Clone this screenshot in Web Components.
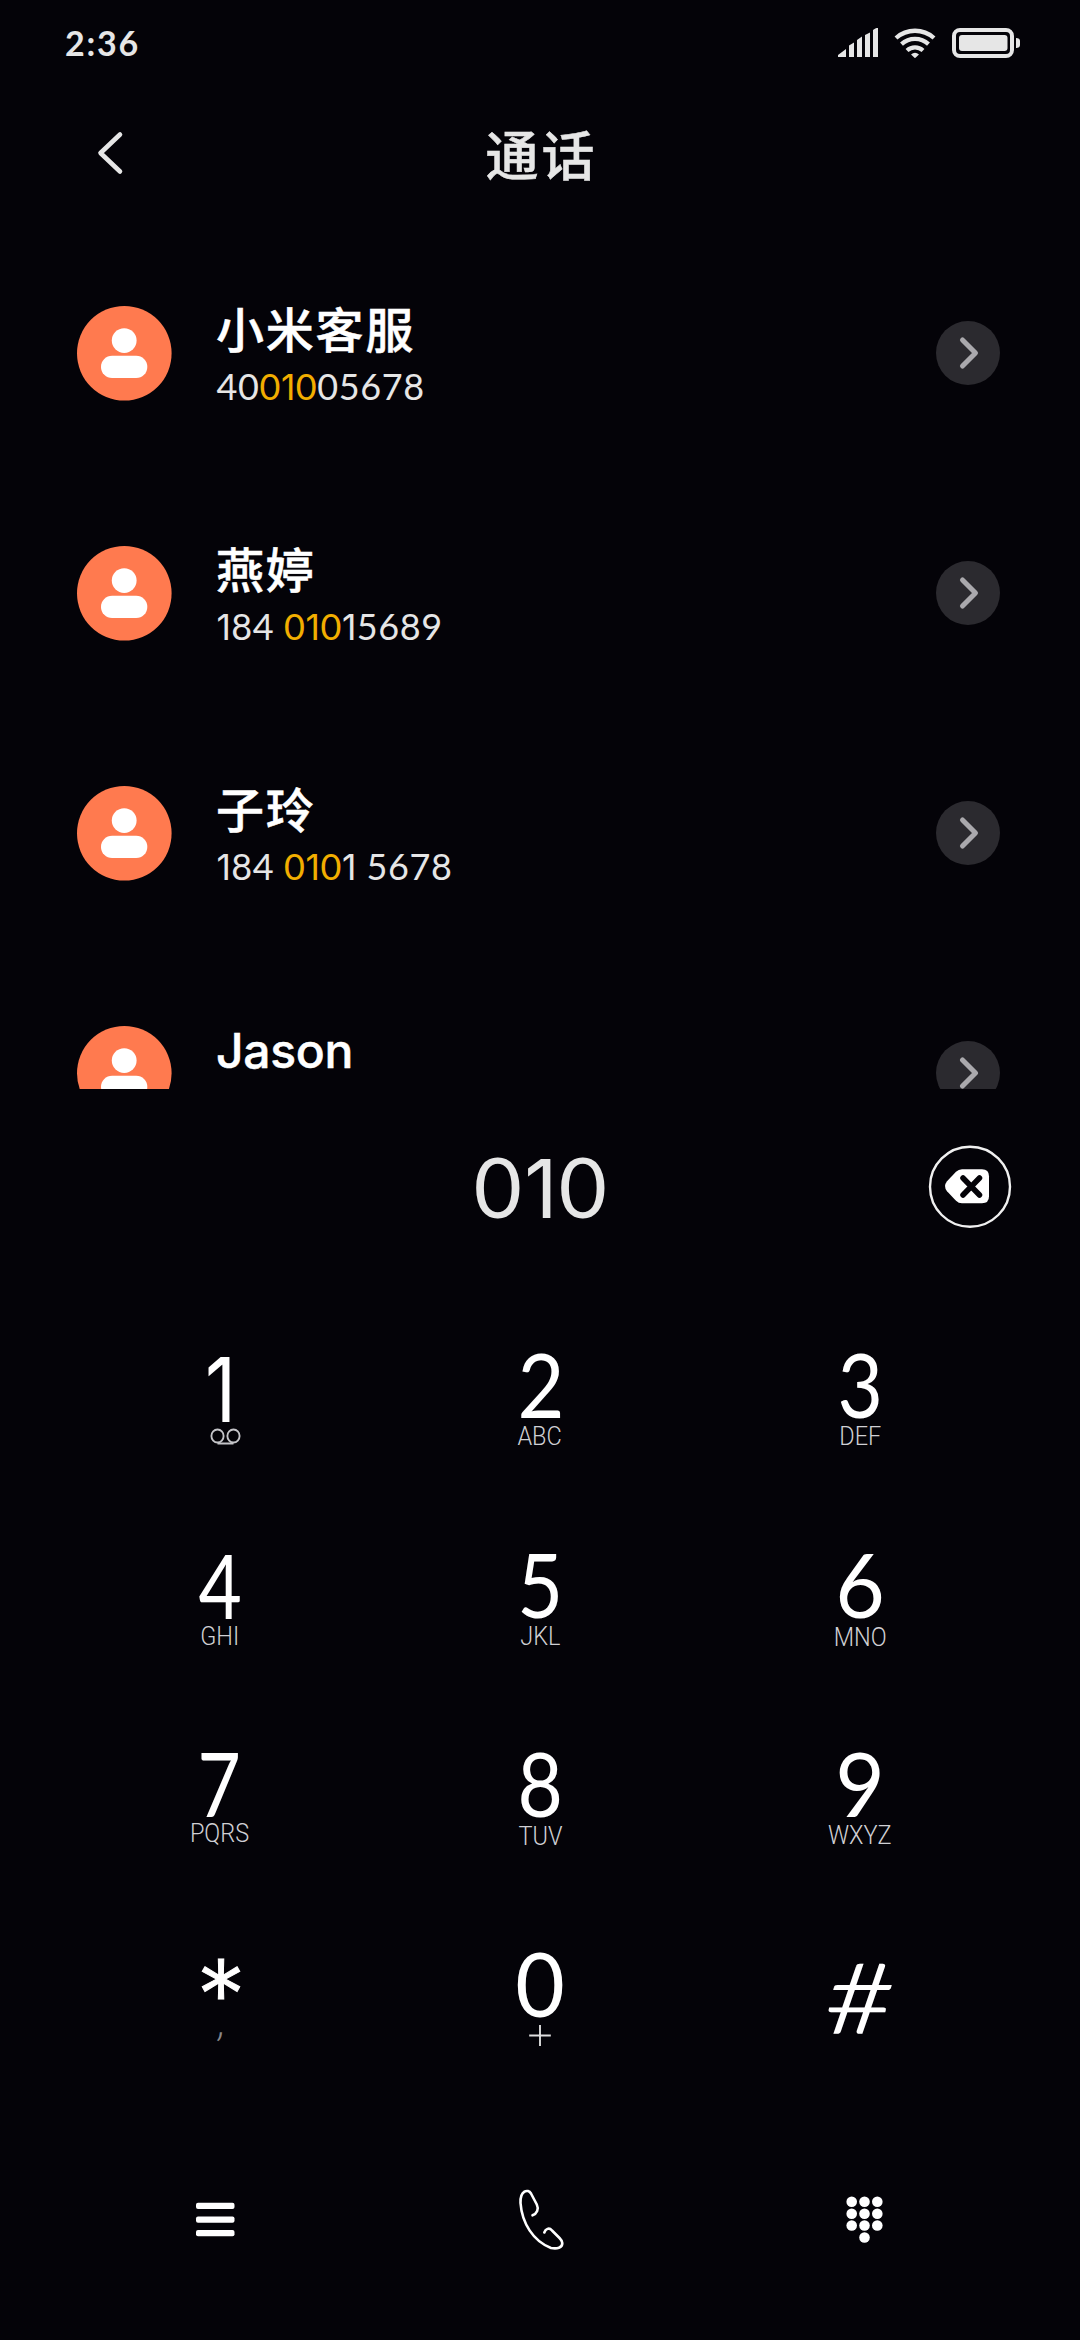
<!DOCTYPE html>
<html lang="zh-CN">
<head>
<meta charset="utf-8">
<title>通话</title>
<style>
html,body{margin:0;background:#040308}
body{width:1080px;height:2340px;overflow:hidden;font-family:Lato,"Noto Sans CJK SC",sans-serif;color:#fff}
</style>
</head>
<body>
<dialer-screen></dialer-screen>
<script>
const define = (name, css, html) => customElements.define(name, class extends HTMLElement {
  connectedCallback() {
    if (this.shadowRoot) return;
    this.attachShadow({mode: 'open'}).innerHTML = `<style>${css}</style>` + (typeof html === 'function' ? html(this) : html);
  }
});

define('status-bar', `
  :host{display:flex;height:86px;box-sizing:border-box;padding:0 60px 0 65px;align-items:center;justify-content:space-between;color:#e6e6e6}
  span{font:700 34px/86px Lato,sans-serif;letter-spacing:1.800px}
  svg{display:block}`, `
  <span>2:36</span>
  <svg width="182" height="30" viewBox="838 28 182 30" fill="#e6e6e6">
    <path d="M838 57v-2l8-6v8zM849 57V45.5l5-3V57zM857 57V40l5-3.5V57zM865 57V35l5-2.5V57zM873 57V30q3-2.500 5-2V57z"/>
    <path d="M896 38a28.500 28.500 0 0 1 38 0M901.500 44.200a20 20 0 0 1 27 0M907 50.500a12 12 0 0 1 16 0" fill="none" stroke="#e6e6e6" stroke-width="4.300"/>
    <path d="M911 54.500q4-3.500 8 0l-4 3.700z"/>
    <rect x="954" y="30" width="58" height="26" rx="6" fill="none" stroke="#e6e6e6" stroke-width="4"/>
    <rect x="959" y="35" width="48.500" height="16" rx="3"/>
    <path d="M1016 38q4 0 4 3v4q0 3-4 3z"/>
  </svg>`);

define('title-bar', `
  :host{display:grid;grid-template-columns:130px 1fr 130px;height:134px;margin-bottom:6px;align-items:center;color:#e6e6e6}
  svg{display:block;margin-left:96px}
  h1{margin:0;text-align:center;font:500 53px/60px "Noto Sans CJK SC",sans-serif;letter-spacing:3px;padding:0 0 0 3px;-webkit-text-stroke:.5px}`, `
  <svg width="28" height="46" viewBox="96 130 28 46"><path d="M120 134.500 100.500 153 120 171.500" fill="none" stroke="#e6e6e6" stroke-width="4.600" stroke-linecap="round" stroke-linejoin="round"/></svg>
  <h1><slot></slot></h1>`);

/* Digit run; "1" uses a face without a foot serif and a narrower advance. */
define('digit-run', `
  :host{display:inline}
  i{font-style:normal;font-family:Inter,sans-serif;font-size:.985em;letter-spacing:var(--one,0)}`,
  el => el.getAttribute('value').replace(/1/g, '<i>1</i>'));

define('contact-row', `
  :host{display:grid;grid-template-columns:95px 1fr 64px;column-gap:44px;height:240px;padding:0 80px 0 77px;align-items:start}
  .avatar{display:block;margin-top:26px}
  .go{display:block;margin-top:41px}
  .name{font:500 48px/56px Lato,"Noto Sans CJK SC",sans-serif;letter-spacing:1.800px;margin-top:22px;height:56px;-webkit-text-stroke:.5px}
  .latin{font:500 48px/58px Inter,sans-serif;letter-spacing:-.3px;-webkit-text-stroke:.5px}
  .phone{font:400 36px/40px Lato,sans-serif;letter-spacing:.6px;color:#e6e6e6;margin:8px 0 0 .5px;white-space:pre;--one:.4px}
  .hit{color:#f2ae00}`, el => `
  <svg class="avatar" width="95" height="95" viewBox="0 0 95 95"><circle cx="47.300" cy="47.300" r="47.300" fill="#ff7a4f"/><circle cx="47.200" cy="34.600" r="12.400" fill="#fff"/><rect x="24" y="49.800" width="46.300" height="22.200" rx="11.100" fill="#fff"/></svg>
  <div><div class="name ${el.hasAttribute('latin') ? 'latin' : ''}"><slot></slot></div>
  ${el.hasAttribute('match') ? `<div class="phone"><digit-run value="${el.getAttribute('before')}"></digit-run><digit-run class="hit" value="${el.getAttribute('match')}"></digit-run><digit-run value="${el.getAttribute('after')}"></digit-run></div>` : ''}</div>
  <svg class="go" width="64" height="64" viewBox="0 0 64 64"><circle cx="32" cy="32" r="32" fill="#2b2a2f"/><path d="M26.500 19 39.500 32 26.500 45" fill="none" stroke="#aaa9ad" stroke-width="5" stroke-linecap="round" stroke-linejoin="round"/></svg>`);

define('contact-list', `
  :host{display:block;padding-top:54px;height:809px;overflow:hidden}`, `<slot></slot>`);

define('number-entry', `
  :host{display:grid;grid-template-columns:1fr 240px 1fr;height:196px;align-items:center}
  output{font:400 83px/100px Lato,sans-serif;text-align:center;color:#e6e6e6;letter-spacing:2.500px;--one:1px;padding:1px 0 0 3px}
  svg{display:block;justify-self:end;margin-right:68px}`, el => `
  <span></span><output><digit-run value="${el.getAttribute('value')}"></digit-run></output>
  <svg width="84" height="84" viewBox="928 1145 84 84"><circle cx="970" cy="1186.700" r="40" fill="none" stroke="#f0f0f0" stroke-width="2.400"/><path d="M962 1169.300h20q7 0 7 7v20q0 7-7 7h-20q-3.500 0-6-2.500l-9-9.500q-4-5 0-10l9-9.500q2.500-2.500 6-2.500z" fill="#fff"/><path d="m963 1178 16.500 17M979.500 1178 963 1195" stroke="#040308" stroke-width="5.500" stroke-linecap="round"/></svg>`);

define('dial-key', `
  :host{display:flex;flex-direction:column;align-items:center;color:#fff}
  .digit{font:400 90px/80px Lato,sans-serif;height:80px;white-space:nowrap;transform:translate(var(--dx,0px),var(--dy,0px)) scaleX(var(--sx,.9)) skewX(var(--skew,0deg))}
  .sub{font:300 25px/28px Roboto,sans-serif;color:#d0d0d4;height:28px;transform:translate(var(--sub-x,0px),var(--sub-y,0px)) scaleX(.94)}`, `
  <div class="digit"><slot></slot></div><div class="sub"><slot name="sub"></slot></div>`);

define('key-pad', `
  :host{display:grid;grid-template-columns:repeat(3,320px);grid-auto-rows:199.700px;padding:58px 60px 0;height:838px;box-sizing:border-box}`, `<slot></slot>`);

define('action-bar', `
  :host{display:grid;grid-template-columns:repeat(3,320px);padding:58px 60px 0;height:76px;align-items:center}
  svg{display:block;justify-self:center}`, `
  <svg width="50" height="76" viewBox="195 2181 50 76" fill="#fff"><rect x="196" y="2202.800" width="38.500" height="6.200" rx="2"/><rect x="196" y="2216.500" width="38.500" height="6.200" rx="2"/><rect x="196" y="2230" width="38.500" height="6.200" rx="2"/></svg>
  <svg width="60" height="76" viewBox="510 2181 60 76" fill="none" stroke="#fff" stroke-width="2.600" stroke-linecap="round" stroke-linejoin="round"><path d="M532.500 2215.300C537 2213.500 539 2209 536.800 2204.500L531 2193.500C528 2188.500 520 2190.500 520.500 2203C522 2223 533 2241 551 2248C557 2249 562.500 2248 562.300 2243C562.200 2241 561 2239.500 559.500 2238L552 2230.500C549 2227 545.500 2229 544.300 2232.500"/></svg>
  <svg width="50" height="76" viewBox="835 2181 50 76" fill="#fff"><circle cx="851.700" cy="2201.700" r="5.300"/><circle cx="864.500" cy="2201.700" r="5.300"/><circle cx="877.300" cy="2201.700" r="5.300"/><circle cx="851.700" cy="2213.700" r="5.300"/><circle cx="864.500" cy="2213.700" r="5.300"/><circle cx="877.300" cy="2213.700" r="5.300"/><circle cx="851.700" cy="2225.500" r="5.300"/><circle cx="864.500" cy="2225.500" r="5.300"/><circle cx="877.300" cy="2225.500" r="5.300"/><circle cx="864.500" cy="2237.500" r="5.300"/></svg>`);

define('dialer-screen', `
  :host{display:flex;flex-direction:column;width:1080px;height:2340px;background:#040308;overflow:hidden}
  contact-list,number-entry,key-pad,title-bar,status-bar,action-bar{flex:none}
  .one{font-family:Inter,sans-serif;font-weight:400;font-size:89px}
  .star{font-family:Inter,sans-serif;font-size:98px;font-weight:300}
  .hash{font-weight:300;font-size:97px;-webkit-text-stroke:1.500px}
  .comma{font-size:40px;display:block;color:#88878b;transform:skewX(-8deg)}
  svg{display:block}`, `
  <status-bar></status-bar>
  <title-bar>通话</title-bar>
  <contact-list>
    <contact-row before="40" match="010" after="05678">小米客服</contact-row>
    <contact-row before="184 " match="010" after="15689">燕婷</contact-row>
    <contact-row before="184 " match="010" after="1 5678">子玲</contact-row>
    <contact-row latin>Jason</contact-row>
  </contact-list>
  <number-entry value="010"></number-entry>
  <key-pad>
    <dial-key style="--sx:.86;--dx:.5px;--dy:4px;--sub-x:5.500px;--sub-y:0px"><span class="one">1</span><svg slot="sub" width="34" height="28" viewBox="0 0 34 28" fill="none" stroke="#c4c4c8" stroke-width="2"><circle cx="8.500" cy="13" r="6.500"/><circle cx="25.500" cy="13" r="6.500"/><path d="M8.500 20.500h17"/></svg></dial-key>
    <dial-key style="--sx:.9;--dx:1px">2<span slot="sub">ABC</span></dial-key>
    <dial-key style="--sx:.87">3<span slot="sub">DEF</span></dial-key>
    <dial-key style="--sx:.83;--dy:1px">4<span slot="sub">GHI</span></dial-key>
    <dial-key style="--sx:.88">5<span slot="sub">JKL</span></dial-key>
    <dial-key style="--sx:.95;--sub-y:1px">6<span slot="sub">MNO</span></dial-key>
    <dial-key style="--sx:.83;--dx:-1px">7<span slot="sub" style="display:block;margin-top:-2px">PQRS</span></dial-key>
    <dial-key style="--sx:.87;--sub-y:1px">8<span slot="sub">TUV</span></dial-key>
    <dial-key style="--sx:.95">9<span slot="sub">WXYZ</span></dial-key>
    <dial-key style="--sx:1;--dx:1px;--dy:13px;--sub-x:2px;--sub-y:-13px"><span class="star" style="-webkit-text-stroke:1px">*</span><span class="comma" slot="sub">,</span></dial-key>
    <dial-key style="--sx:.95">0<svg slot="sub" width="24" height="28" viewBox="0 0 24 28" stroke="#e0e0e0" stroke-width="2"><path d="M12 3v21M.5 13.500h23"/></svg></dial-key>
    <dial-key style="--sx:1.220;--dy:14px;--skew:-4deg"><span class="hash">#</span></dial-key>
  </key-pad>
  <action-bar></action-bar>`);
</script>
</body>
</html>
